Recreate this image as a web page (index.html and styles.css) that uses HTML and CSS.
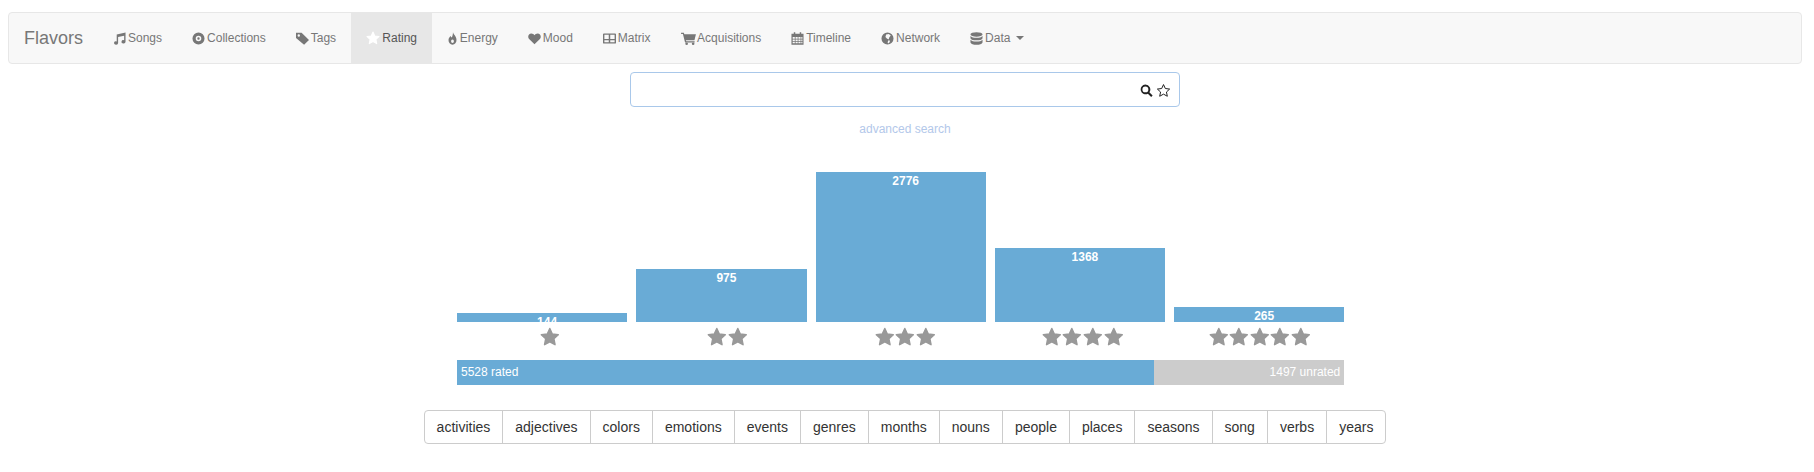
FILE: index.html
```html
<!DOCTYPE html>
<html lang="en">
<head>
  <meta charset="UTF-8">
  <title>Flavors</title>
  <link rel="stylesheet" href="styles.css">
</head>
<body>

  <svg class="sprites" width="0" height="0">
    <defs>
      <symbol id="i-star" viewBox="0 0 24 24"><path d="M12 1.800l3.100 6.700 7.300.9-5.400 5 1.400 7.300-6.400-3.600-6.400 3.600 1.400-7.300-5.400-5 7.300-.9z" stroke-width="1.800" stroke-linejoin="round"/></symbol>
    </defs>
  </svg>

  <!-- Navbar -->
  <nav class="navbar">
    <a class="brand" href="#">Flavors</a>
    <a class="nav-item" href="#">
      <svg class="icon" viewBox="0 0 14 14"><path d="M4 2.600L13.500.5v10a2.200 1.800 0 1 1-1.500-1.700V4L5.500 5.300v6.500a2.200 1.800 0 1 1-1.500-1.700z"/></svg>Songs
    </a>
    <a class="nav-item" href="#">
      <svg class="icon" viewBox="0 0 14 14"><path fill-rule="evenodd" d="M7 .5a6.500 6.500 0 1 0 0 13 6.500 6.500 0 0 0 0-13zm0 3.500a3 3 0 1 1 0 6 3 3 0 0 1 0-6zM7 5.700a1.300 1.300 0 1 0 0 2.600 1.300 1.300 0 0 0 0-2.600z"/></svg>Collections
    </a>
    <a class="nav-item" href="#">
      <svg class="icon" viewBox="0 0 14 14"><path fill-rule="evenodd" d="M0 .8h6L14 8.500 8.700 13.800 0 6.500zM3 2.500a1.300 1.300 0 1 0 0 2.600 1.300 1.300 0 0 0 0-2.600z"/></svg>Tags
    </a>
    <a class="nav-item active" href="#">
      <svg class="icon star-icon"><use href="#i-star"/></svg>Rating
    </a>
    <a class="nav-item" href="#">
      <svg class="icon flame" viewBox="2 0 10 14"><path fill-rule="evenodd" d="M7.500.3c.6 2.500 3.800 4.200 3.800 8.200A4.300 5 0 0 1 7 13.700a4.300 5 0 0 1-4.300-5.200C2.700 6.500 4 5.500 5 4.200c.3 1 .7 1.400 1.300 1.700C6.800 4.500 7.600 2.500 7.500.3zM7 8.200a1.500 1.800 0 0 0-1.500 2A1.500 1.500 0 0 0 7 11.800a1.500 1.500 0 0 0 1.500-1.600A1.500 1.800 0 0 0 7 8.200z"/></svg>Energy
    </a>
    <a class="nav-item" href="#">
      <svg class="icon" viewBox="0 0 14 14"><path d="M7 13.300L1.200 7.500C-.8 5.300.5 1.500 3.600 1.500c1.500 0 2.600.9 3.400 1.900.8-1 1.900-1.900 3.400-1.900 3.100 0 4.400 3.800 2.400 6z"/></svg>Mood
    </a>
    <a class="nav-item" href="#">
      <svg class="icon" viewBox="0 0 14 14"><path fill-rule="evenodd" d="M1 1.500h12a1 1 0 0 1 1 1v9a1 1 0 0 1-1 1H1a1 1 0 0 1-1-1v-9a1 1 0 0 1 1-1zm.5 1.500v4.500h4.700V3zm6.300 0v4.500h4.700V3zM1.500 8.800v2.300h4.700V8.800zm6.300 0v2.300h4.700V8.800z"/></svg>Matrix
    </a>
    <a class="nav-item" href="#">
      <svg class="icon wide" viewBox="0 0 16 14"><path d="M0 .8h3l.5 1.600H16l-1.600 6.400H5.200l.4 1.200h9v1.300H4.300L2 2.100H0z"/><circle cx="6" cy="12.600" r="1.400"/><circle cx="13" cy="12.600" r="1.400"/></svg>Acquisitions
    </a>
    <a class="nav-item" href="#">
      <svg class="icon" viewBox="0 0 14 14"><path fill-rule="evenodd" d="M3 .3h1.600V2h4.800V.3H11V2h2.500v11.700H.5V2H3zM1.800 5.500v1.700h2.300V5.500zm3.100 0v1.700h2.300V5.500zm3.100 0v1.700h2.300V5.500zm3.100 0v1.700h1.200V5.500zM1.800 8v1.700h2.300V8zm3.100 0v1.700h2.300V8zm3.100 0v1.700h2.300V8zm3.100 0v1.700h1.200V8zm-9.300 2.500v1.700h2.300v-1.700zm3.100 0v1.700h2.300v-1.700zm3.100 0v1.700h2.300v-1.700zm3.100 0v1.700h1.200v-1.700z"/></svg>Timeline
    </a>
    <a class="nav-item" href="#">
      <svg class="icon" viewBox="0 0 14 14"><path fill-rule="evenodd" d="M7 .5a6.500 6.500 0 1 0 0 13 6.500 6.500 0 0 0 0-13zM5.500 2.800l2.800-.6 2.200 1.600-1.500 1.900-.8 2.300L6.300 7 4.800 5.500zM8 9l1.800.5L8.500 12.300 7 11.200z"/></svg>Network
    </a>
    <a class="nav-item" href="#">
      <svg class="icon" viewBox="0 0 14 14"><ellipse cx="7" cy="2.600" rx="6.500" ry="2.400"/><path d="M.5 4.300c1 1.400 3.800 2 6.500 2s5.500-.6 6.500-2v2.300c-.4 1.500-3.300 2.400-6.500 2.400S.9 8.100.5 6.600zM.5 8.300c1 1.400 3.800 2 6.500 2s5.500-.6 6.500-2v2.900c-.4 1.600-3.300 2.500-6.500 2.500S.9 12.800.5 11.200z"/></svg>Data<span class="caret"></span>
    </a>
  </nav>

  <!-- Search -->
  <div class="search">
    <div class="search-box">
      <svg class="search-icon" viewBox="0 0 14 14"><path fill-rule="evenodd" d="M5.800.5a5.300 5.300 0 0 1 4.300 8.400l3.500 3.500-1.600 1.600-3.500-3.500A5.300 5.300 0 1 1 5.800.5zm0 2.100a3.200 3.200 0 1 0 0 6.400 3.200 3.200 0 0 0 0-6.400z"/></svg>
      <svg class="search-icon star-outline" viewBox="0 0 24 24"><path d="M12 2.500l2.900 6.300 6.900.9-5.100 4.700 1.400 6.800-6.100-3.400-6.100 3.400 1.400-6.800-5.100-4.700 6.900-.9z"/></svg>
    </div>
    <a class="advanced" href="#">advanced search</a>
  </div>

  <!-- Rating histogram -->
  <div class="rating">
    <div class="histogram">
      <div class="column">
        <div class="bar-area"><div class="bar" style="height: 9px">144</div></div>
        <div class="stars stars-1"><svg class="star"><use href="#i-star"/></svg></div>
      </div>
      <div class="column">
        <div class="bar-area"><div class="bar" style="height: 53px">975</div></div>
        <div class="stars stars-2"><svg class="star"><use href="#i-star"/></svg><svg class="star"><use href="#i-star"/></svg></div>
      </div>
      <div class="column">
        <div class="bar-area"><div class="bar" style="height: 150px">2776</div></div>
        <div class="stars stars-3"><svg class="star"><use href="#i-star"/></svg><svg class="star"><use href="#i-star"/></svg><svg class="star"><use href="#i-star"/></svg></div>
      </div>
      <div class="column">
        <div class="bar-area"><div class="bar" style="height: 74px">1368</div></div>
        <div class="stars stars-4"><svg class="star"><use href="#i-star"/></svg><svg class="star"><use href="#i-star"/></svg><svg class="star"><use href="#i-star"/></svg><svg class="star"><use href="#i-star"/></svg></div>
      </div>
      <div class="column">
        <div class="bar-area"><div class="bar" style="height: 15px">265</div></div>
        <div class="stars stars-5"><svg class="star"><use href="#i-star"/></svg><svg class="star"><use href="#i-star"/></svg><svg class="star"><use href="#i-star"/></svg><svg class="star"><use href="#i-star"/></svg><svg class="star"><use href="#i-star"/></svg></div>
      </div>
    </div>

    <div class="progress">
      <div class="rated" style="width: 78.6%">5528 rated</div>
      <div class="unrated">1497 unrated</div>
    </div>
  </div>

  <!-- Tag groups -->
  <div class="tag-groups">
    <button>activities</button><button>adjectives</button><button>colors</button><button>emotions</button><button>events</button><button>genres</button><button>months</button><button>nouns</button><button>people</button><button>places</button><button>seasons</button><button>song</button><button>verbs</button><button>years</button>
  </div>

</body>
</html>
```

FILE: styles.css
```css
* {
  box-sizing: border-box;
}

body {
  margin: 0;
  padding: 12px 12px 0 8px;
  font-family: "Liberation Sans", Arial, sans-serif;
  font-size: 12px;
  color: #333;
  background-color: #fff;
}

a {
  text-decoration: none;
}

.sprites {
  display: block;
}

.navbar {
  display: flex;
  align-items: stretch;
  height: 52px;
  background-color: #f8f8f8;
  border: 1px solid #e7e7e7;
  border-radius: 4px;
}

.brand {
  padding: 0 15px;
  line-height: 50px;
  font-size: 18px;
  color: #777;
}

.nav-item {
  display: flex;
  align-items: center;
  padding: 0 15px;
  color: #777;
  white-space: nowrap;
}

.nav-item.active {
  background-color: #e7e7e7;
  color: #555;
}

.nav-item.active .icon {
  fill: #fff;
  stroke: #fff;
}

.icon {
  width: 13px;
  height: 13px;
  margin-right: 2px;
  fill: #777;
}

.icon.wide {
  width: 15px;
  margin-right: 1.600px;
}

.icon.flame {
  width: 11px;
  margin-right: 1.800px;
}

.icon.star-icon {
  width: 14px;
  height: 14px;
  margin-right: 2.200px;
}

.caret {
  width: 0;
  height: 0;
  margin-left: 6px;
  border-top: 4px solid #777;
  border-left: 4px solid transparent;
  border-right: 4px solid transparent;
}

.search {
  display: flex;
  flex-direction: column;
  align-items: center;
  margin-top: 8px;
}

.search-box {
  display: flex;
  align-items: center;
  justify-content: flex-end;
  gap: 3px;
  width: 550px;
  height: 35px;
  padding: 1px 8px 0 0;
  border: 1px solid #a9c8ea;
  border-radius: 4px;
}

.search-icon {
  width: 13px;
  height: 13px;
  fill: #222;
}

.search-icon.star-outline {
  width: 15px;
  height: 15px;
  fill: none;
  stroke: #222;
  stroke-width: 1.600;
}

.advanced {
  margin-top: 15px;
  font-size: 12px;
  color: #b3c8ea;
}

.rating {
  width: 887.300px;
  margin: 36px 0 0 449px;
}

.histogram {
  display: flex;
  gap: 9px;
}

.column {
  flex: 1;
}

.bar-area {
  display: flex;
  align-items: flex-end;
  height: 150px;
}

.bar {
  width: 100%;
  overflow: hidden;
  padding: 2px 0 0 10px;
  text-align: center;
  font-size: 12px;
  font-weight: bold;
  line-height: 15px;
  color: #fff;
  background-color: #69abd6;
}

.stars {
  display: flex;
  justify-content: center;
  gap: 1px;
  margin-top: 5px;
}

.stars-1 {
  padding-left: 16px;
}

.stars-2 {
  padding-left: 12px;
}

.stars-3 {
  padding-left: 9px;
}

.stars-4 {
  padding-left: 5px;
}

.stars-5 {
  padding-left: 1px;
}

.star {
  width: 19.600px;
  height: 19.600px;
  fill: #999;
  stroke: #999;
}

.progress {
  display: flex;
  height: 25px;
  margin-top: 13px;
  font-size: 12px;
  line-height: 25px;
  color: #fff;
  background-color: #ccc;
}

.rated {
  padding-left: 4px;
  background-color: #69abd6;
}

.unrated {
  flex: 1;
  padding-right: 4px;
  text-align: right;
}

.tag-groups {
  display: flex;
  justify-content: center;
  margin-top: 25px;
}

.tag-groups button {
  height: 34px;
  padding: 0 12px;
  margin-left: -1px;
  font-family: inherit;
  font-size: 14px;
  color: #333;
  background-color: #fff;
  border: 1px solid #ccc;
}

.tag-groups button:first-child {
  margin-left: 0;
  border-radius: 4px 0 0 4px;
}

.tag-groups button:last-child {
  border-radius: 0 4px 4px 0;
}
```
